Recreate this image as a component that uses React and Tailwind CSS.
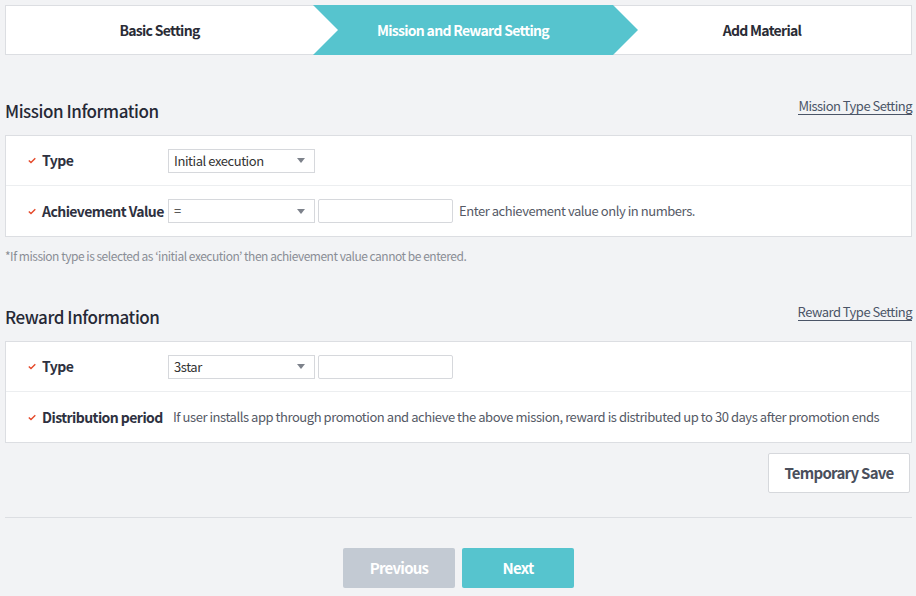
import React from "react";

const font = { fontFamily: '"Noto Sans CJK KR", "Noto Sans", sans-serif' };

function Check() {
  return (
    <svg width="8" height="7" viewBox="0 0 8 7" className="shrink-0">
      <path d="M0.8 3.4 L3 5.6 L7.3 1.2" fill="none" stroke="#e5492a" strokeWidth="1.4" />
    </svg>
  );
}

function Select({ value }) {
  return (
    <div className="flex h-[24px] w-[147px] shrink-0 items-center justify-between border border-[#d6d8dc] bg-white pl-[5px] pr-[9px] text-[13px] text-[#333]">
      <span>{value}</span>
      <svg width="8" height="5" viewBox="0 0 8 5">
        <path d="M0 0 H8 L4 5 Z" fill="#7d828b" />
      </svg>
    </div>
  );
}

function Input() {
  return <div className="ml-[3px] h-[24px] w-[135px] shrink-0 rounded-[2px] border border-[#d6d8dc] bg-white" />;
}

function Row({ label, children, border }) {
  return (
    <div className={"flex h-[50px] items-center pl-[22px] " + (border ? "border-b border-[#eceef0]" : "")}>
      <Check />
      <div className="ml-[6px] w-[126px] shrink-0 whitespace-nowrap text-[14px] font-bold tracking-[-0.04em] text-[#2e3140]">
        {label}
      </div>
      {children}
    </div>
  );
}

function Heading({ title, link, mt }) {
  return (
    <div className={"flex h-[30px] items-center justify-between " + mt}>
      <div className="text-[17px] font-medium tracking-[-0.027em] text-[#262936]">{title}</div>
      <div className="mb-[10px] border-b border-[#4b5567] text-[13px] leading-[16px] tracking-[-0.04em] text-[#4b5567]">{link}</div>
    </div>
  );
}

export default function App() {
  return (
    <div className="min-h-[596px] bg-[#f2f3f5] pl-[5px] pr-[4px] pt-[5px] tracking-[-0.027em]" style={font}>
      {/* Stepper */}
      <div className="flex h-[50px] border border-[#dcdee2] bg-white text-[14px] font-bold tracking-[-0.05em]">
        <div className="flex w-[307px] items-center justify-center text-[#2a2c36]">Basic Setting</div>
        <div className="relative z-10 -my-px mr-[-25px] flex h-[50px] w-[325px] items-center justify-center bg-[#56c4ce] pr-[25px] text-white [clip-path:polygon(0_0,300px_0,100%_50%,300px_100%,0_100%,25px_50%)]">
          Mission and Reward Setting
        </div>
        <div className="flex flex-1 items-center justify-center text-[#2a2c36]">Add Material</div>
      </div>

      <Heading title="Mission Information" link="Mission Type Setting" mt="mt-[41px]" />
      <div className="mt-[9px] border border-[#dcdee2] bg-white">
        <Row label="Type" border>
          <Select value="Initial execution" />
        </Row>
        <Row label="Achievement Value">
          <Select value="=" />
          <Input />
          <span className="ml-[6px] whitespace-nowrap text-[13px] tracking-[-0.45px] text-[#555a66]">Enter achievement value only in numbers.</span>
        </Row>
      </div>
      <div className="mt-[10px] text-[12px] leading-[18px] tracking-[-0.48px] text-[#8a8e96]">
        *If mission type is selected as ‘initial execution’ then achievement value cannot be entered.
      </div>

      <Heading title="Reward Information" link="Reward Type Setting" mt="mt-[37px]" />
      <div className="mt-[9px] border border-[#dcdee2] bg-white">
        <Row label="Type" border>
          <Select value="3star" />
          <Input />
        </Row>
        <Row label="Distribution period">
          <span className="ml-[5px] whitespace-nowrap text-[13px] tracking-[-0.45px] text-[#555a66]">
            If user installs app through promotion and achieve the above mission, reward is distributed up to 30 days after promotion ends
          </span>
        </Row>
      </div>

      <div className="mt-[10px] flex justify-end pr-[2px]">
        <div className="flex h-[40px] w-[142px] items-center justify-center rounded-[2px] border border-[#d6d8dc] bg-white text-[15px] font-bold tracking-[-0.05em] text-[#4a4f5c]">
          Temporary Save
        </div>
      </div>

      <div className="mt-[24px] h-px bg-[#dcdee2]" />

      <div className="mt-[30px] flex justify-center gap-[7px] pb-[8px]">
        <div className="flex h-[40px] w-[112px] items-center justify-center rounded-[2px] bg-[#c3cad3] text-[15px] font-bold tracking-[-0.05em] text-white">
          Previous
        </div>
        <div className="flex h-[40px] w-[112px] items-center justify-center rounded-[2px] bg-[#56c4ce] text-[15px] font-bold tracking-[-0.05em] text-white">
          Next
        </div>
      </div>
    </div>
  );
}
